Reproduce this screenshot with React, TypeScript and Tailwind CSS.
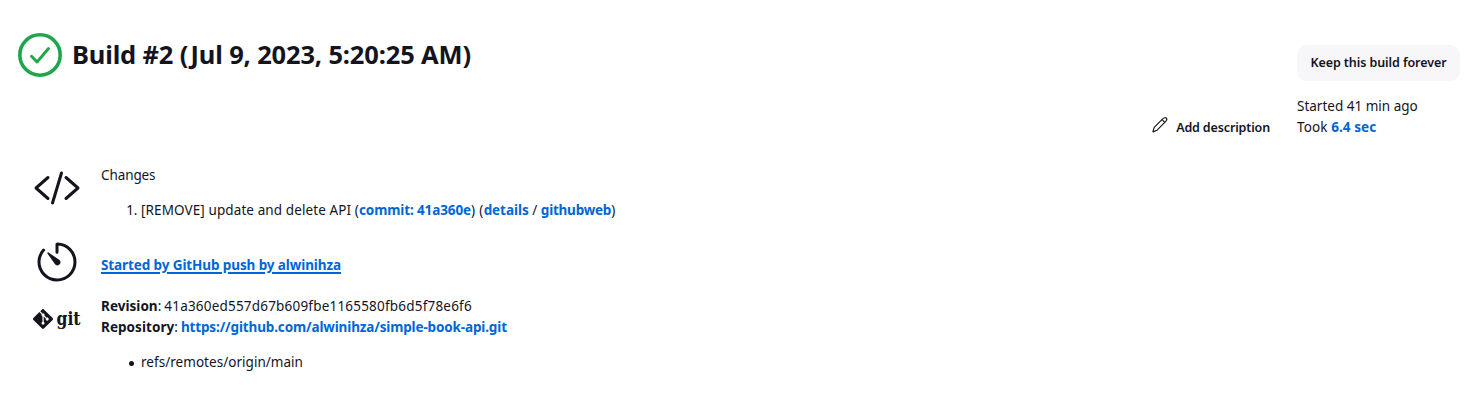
import type { ReactNode } from "react";
import { SiGit } from "react-icons/si";

function StatusIcon() {
  return (
    <svg className="size-12 shrink-0" viewBox="0 0 48 48" fill="none" stroke="#1ea64b" strokeLinecap="round" strokeLinejoin="round">
      <circle cx="24" cy="24" r="20.2" strokeWidth="3.6" />
      <path d="M15.5 25.2l5.6 5.8L32.5 17.5" strokeWidth="2.9" />
    </svg>
  );
}

function CodeIcon() {
  return (
    <svg className="size-12" viewBox="0 0 512 512" fill="none" stroke="currentColor" strokeWidth="32" strokeLinecap="round" strokeLinejoin="round">
      <path d="M160 368L32 256l128-112M352 368l128-112-128-112M304 96l-96 320" />
    </svg>
  );
}

function TimerIcon() {
  return (
    <svg className="size-12" viewBox="0 0 512 512">
      <path
        d="M112.91 128A191.85 191.85 0 0064 254c-1.18 106.35 85.65 193.8 192 194 106.2.2 192-85.83 192-192 0-104.54-83.55-189.61-187.5-192a4.36 4.36 0 00-4.5 4.37V152"
        fill="none" stroke="currentColor" strokeWidth="32" strokeLinecap="round" strokeLinejoin="round"
      />
      <path d="M233.38 278.63l-79-113a8.13 8.13 0 0111.32-11.32l113 79a32.5 32.5 0 01-37.25 53.26 33.21 33.21 0 01-8.07-7.94z" fill="currentColor" />
    </svg>
  );
}

function PencilIcon() {
  return (
    <svg className="size-4" viewBox="0 0 16 16" fill="none" stroke="currentColor" strokeWidth="1.15" strokeLinecap="round" strokeLinejoin="round">
      <path d="M.9 14.900l1.300-4.500 8.500-8.500c1.400-1.400 2.900-1.500 3.600-.8.7.7.600 2.200-.8 3.600L5.100 13.200z" />
      <path d="M10.300 2.900l2.300 2.300" />
    </svg>
  );
}

function Bold({ className, children }: { className: string; children: ReactNode }) {
  return <b className={`font-bold ${className}`}>{children}</b>;
}

function Link({ className, children }: { className: string; children: ReactNode }) {
  return (
    <a href="#" className={`font-bold text-[#0066d6] ${className}`}>
      {children}
    </a>
  );
}

function Row({ icon, className, children }: { icon: ReactNode; className: string; children: ReactNode }) {
  return (
    <section className={`flex ${className}`}>
      <div className="mr-5 flex w-12 shrink-0 items-start">{icon}</div>
      <div className="whitespace-pre pt-px">{children}</div>
    </section>
  );
}

export default function App() {
  return (
    <main className="h-[409px] w-full overflow-hidden bg-white font-['Noto_Sans',sans-serif] text-[13.5px] leading-[21px] text-[#14141f]">
      <header className="flex h-[164px] items-start justify-between pl-4 pr-[6px]">
        <div className="mt-[31px] flex h-12 items-center gap-2">
          <StatusIcon />
          <h1 className="whitespace-nowrap pb-0.5 text-[25.5px] font-bold leading-9 tracking-[-0.16px]">Build #2 (Jul 9, 2023, 5:20:25 AM)</h1>
        </div>
        <div className="flex gap-[27px]">
          <a href="#" className="mt-[117px] flex h-5 gap-2 whitespace-nowrap text-[12.5px] font-semibold leading-[22px] tracking-[-0.14px]">
            <PencilIcon />
            Add description
          </a>
          <div className="mt-[45px] w-[163px]">
            <button className="flex h-9 w-full items-center justify-center whitespace-nowrap rounded-[10px] bg-[#f7f7fa] pb-px text-[12.5px] font-semibold tracking-[-0.083px]">
              Keep this build forever
            </button>
            <div className="mt-[15px] whitespace-pre">
              <p className="tracking-[0]">Started 41 min ago</p>
              <p>
                <span className="tracking-[0.12px]">Took </span>
                <Link className="tracking-[0.063px]">6.4 sec</Link>
              </p>
            </div>
          </div>
        </div>
      </header>

      <div className="pl-[33px]">
        <Row icon={<CodeIcon />} className="h-[74px]">
          <p className="tracking-[-0.098px]">Changes</p>
          <ol className="mt-[14px] list-decimal pl-10">
            <li>
              <span className="tracking-[0.1px]">[REMOVE] update and delete API (</span>
              <Link className="tracking-[-0.113px]">commit: 41a360e</Link>
              <span className="tracking-[0.35px]">) (</span>
              <Link className="tracking-[-0.054px]">details</Link>
              <span className="tracking-[0.05px]"> / </span>
              <Link className="tracking-[-0.23px]">githubweb</Link>)
            </li>
          </ol>
        </Row>

        <Row icon={<TimerIcon />} className="h-[57px]">
          <p className="mt-4">
            <Link className="underline decoration-[1.5px] underline-offset-2 tracking-[-0.102px]">Started by GitHub push by alwinihza</Link>
          </p>
        </Row>

        <Row
          icon={
            <div className="flex h-12 items-center gap-[3px]">
              <SiGit className="size-5 shrink-0" />
              <svg className="h-10 w-[25px] overflow-visible" viewBox="0 0 25 40" fill="currentColor">
                <text x="0.5" y="25.500" textLength="24" lengthAdjust="spacingAndGlyphs" className="font-['DejaVu_Serif',serif] text-[18.5px] font-bold">git</text>
              </svg>
            </div>
          }
          className=""
        >
          <p>
            <Bold className="tracking-[0.03px]">Revision</Bold>
            <span className="tracking-[-0.25px]">: </span>
            <span className="tracking-[0.198px]">41a360ed557d67b609fbe1165580fb6d5f78e6f6</span>
          </p>
          <p>
            <Bold className="tracking-[0.05px]">Repository</Bold>
            <span className="tracking-[-0.25px]">: </span>
            <Link className="tracking-[-0.142px]">https://github.com/alwinihza/simple-book-api.git</Link>
          </p>
          <ul className="mt-[14px] pl-7">
            <li className="flex items-center gap-[7px] tracking-[0.036px]">
              <span className="mt-0.5 size-[5px] rounded-full bg-[#14141f]" />
              refs/remotes/origin/main
            </li>
          </ul>
        </Row>
      </div>
    </main>
  );
}
